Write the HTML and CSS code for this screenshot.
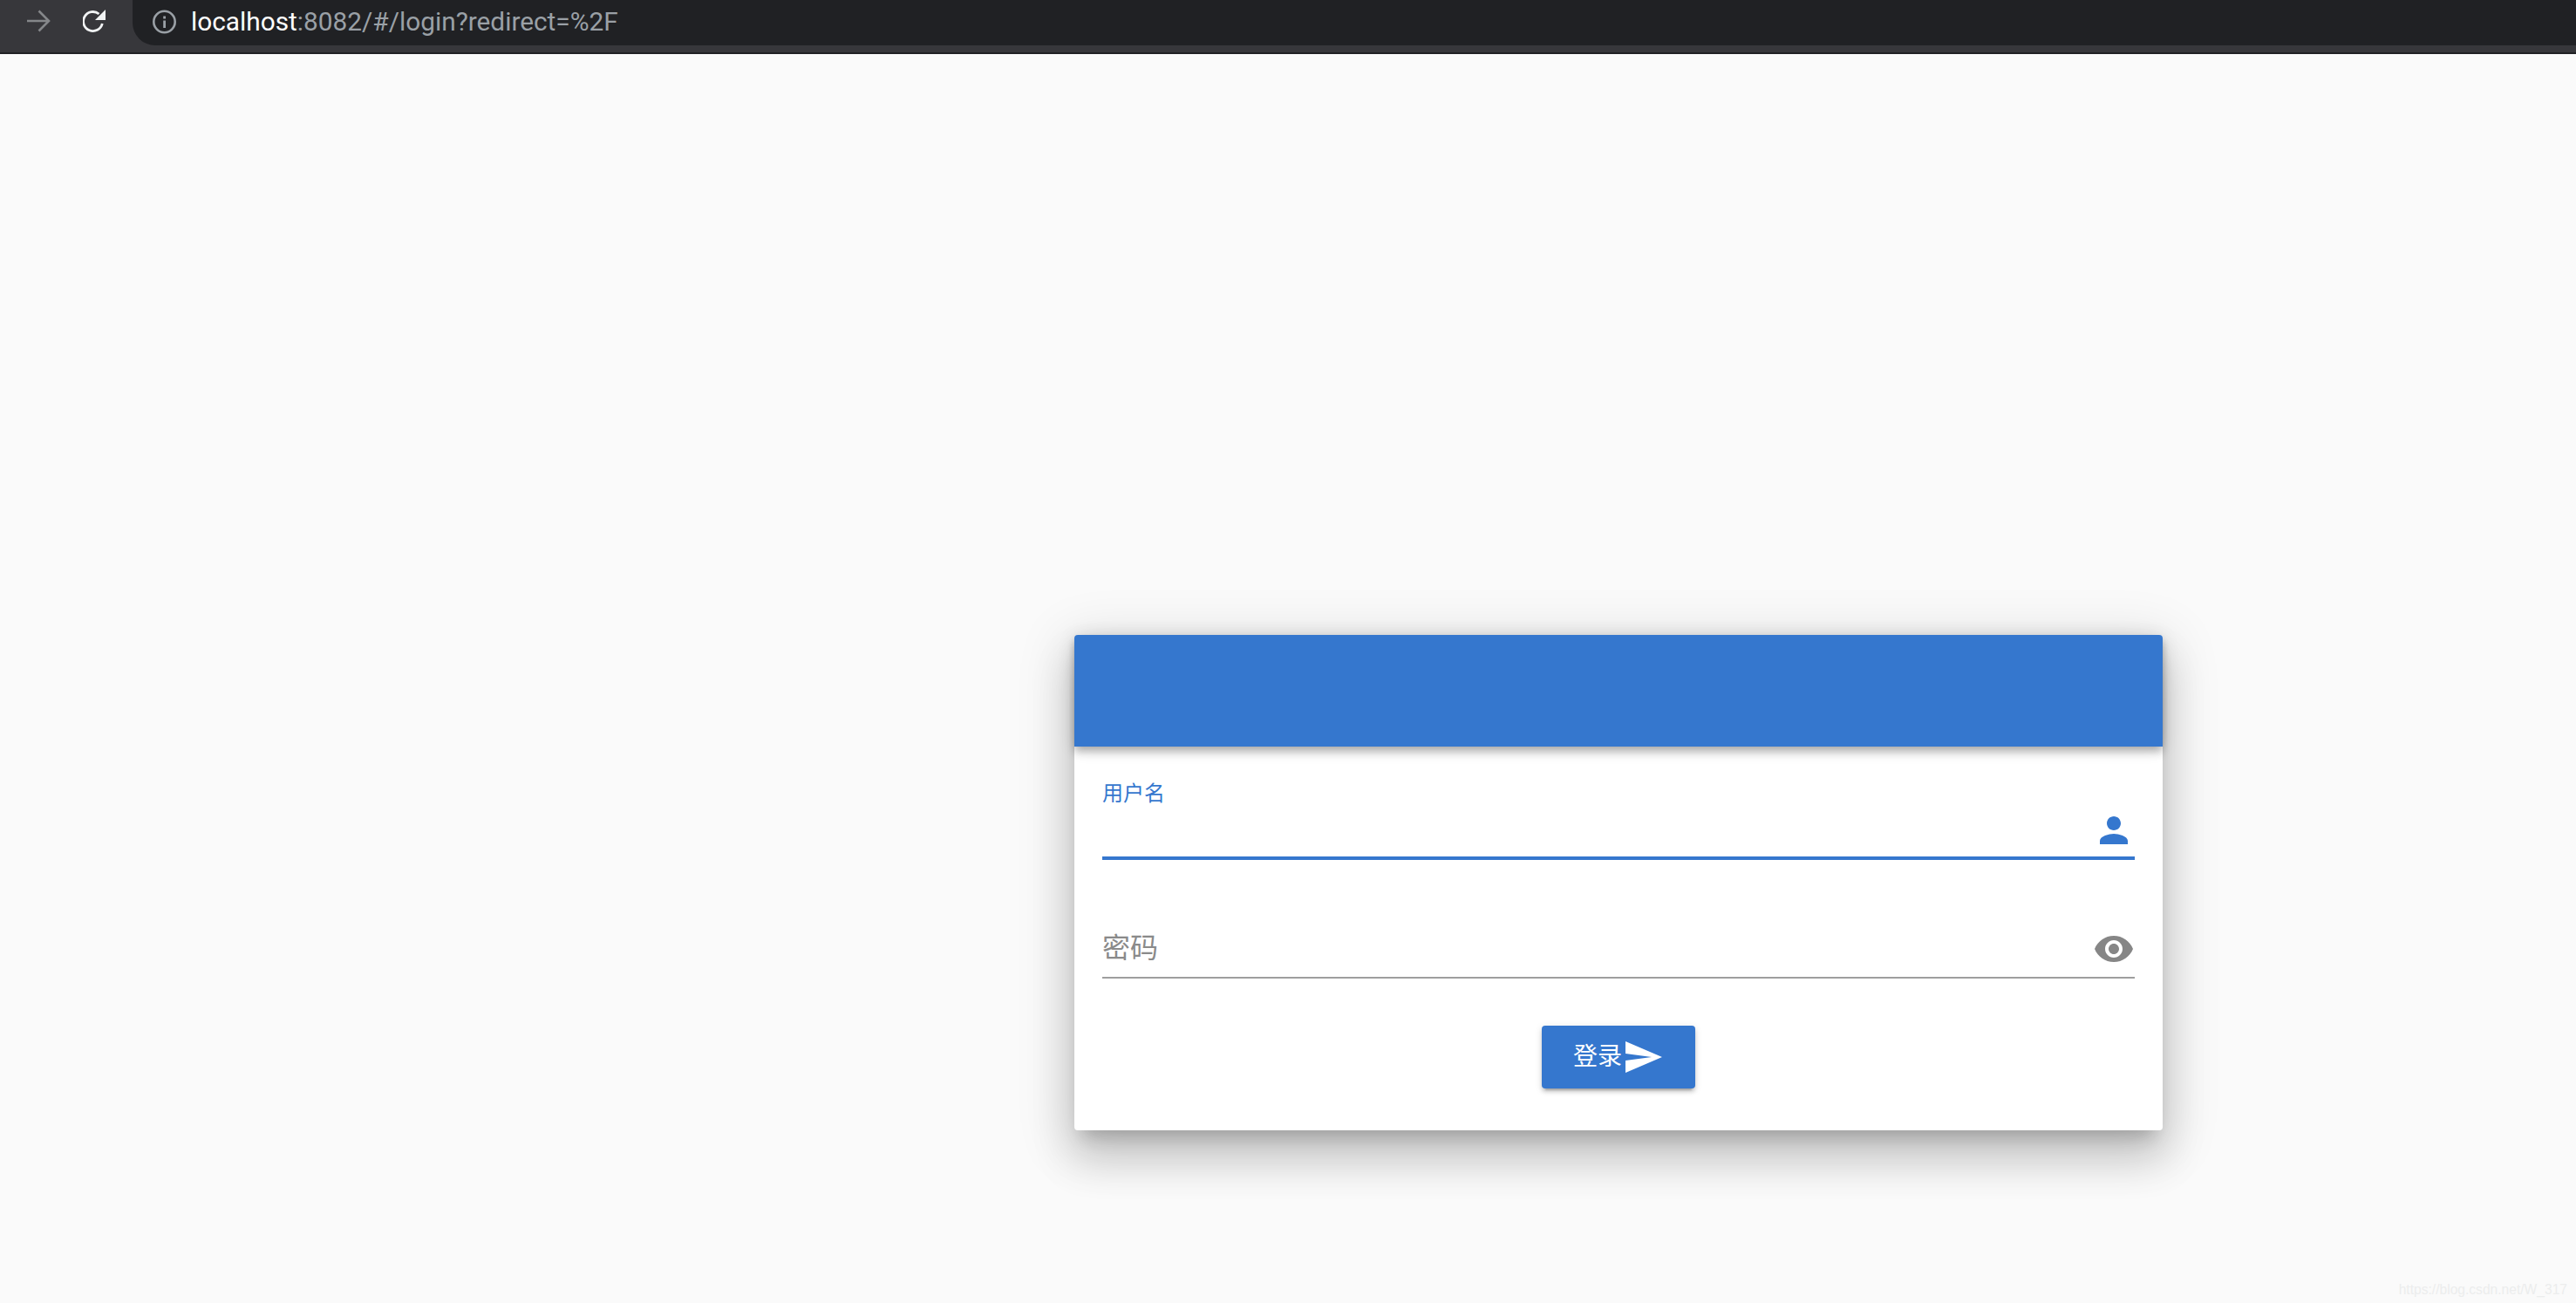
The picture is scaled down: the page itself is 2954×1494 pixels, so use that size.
FILE: index.html
```html
<!DOCTYPE html>
<html lang="zh">
<head>
<meta charset="utf-8">
<title>登录</title>
<link rel="stylesheet" href="styles.css">
</head>
<body>
<header class="toolbar">
  <svg class="nav-icon forward" viewBox="0 0 28 28" width="28" height="28"><path d="M0 13H25M13.500 1.500L25 13L13.500 24.500" fill="none" stroke="#85878a" stroke-width="2.600"/></svg>
  <svg class="nav-icon reload" viewBox="0 0 28 28" width="28" height="28"><path d="M22.300 16A11 11 0 1 1 18.500 5" fill="none" stroke="#f1f3f4" stroke-width="2.800"/><path d="M26 0V12H14Z" fill="#f1f3f4"/></svg>
  <div class="omnibox">
    <svg class="info" viewBox="0 0 28 28" width="28" height="28"><circle cx="13.500" cy="14" r="12.200" fill="none" stroke="#9aa0a6" stroke-width="2.600"/><rect x="12.200" y="12.500" width="2.800" height="8.500" fill="#9aa0a6"/><rect x="12.200" y="7.500" width="2.800" height="3" fill="#9aa0a6"/></svg>
    <span class="url"><span class="host">localhost</span>:8082/#/login?redirect=%2F</span>
  </div>
</header>
<main class="page">
  <section class="card">
    <div class="card-header"></div>
    <form class="card-body">
      <div class="field active">
        <label class="float-label">用户名</label>
        <svg class="field-icon" viewBox="0 0 24 24" width="48" height="48"><path d="M12 12c2.210 0 4-1.790 4-4s-1.790-4-4-4-4 1.790-4 4 1.790 4 4 4zm0 2c-2.670 0-8 1.340-8 4v2h16v-2c0-2.660-5.330-4-8-4z"/></svg>
      </div>
      <div class="field">
        <span class="placeholder">密码</span>
        <svg class="field-icon" viewBox="0 0 24 24" width="48" height="48"><path d="M12 4.500C7 4.500 2.730 7.610 1 12c1.730 4.390 6 7.500 11 7.500s9.270-3.110 11-7.500c-1.730-4.390-6-7.500-11-7.500zM12 17c-2.760 0-5-2.240-5-5s2.240-5 5-5 5 2.240 5 5-2.240 5-5 5zm0-8c-1.660 0-3 1.340-3 3s1.340 3 3 3 3-1.340 3-3-1.340-3-3-3z"/></svg>
      </div>
      <div class="actions">
        <button class="submit" type="button">登录<svg viewBox="0 0 24 24" width="48" height="48"><path d="M2.010 21L23 12 2.010 3 2 10l15 2-15 2z"/></svg></button>
      </div>
    </form>
  </section>
</main>
<div class="watermark">https://blog.csdn.net/W_317</div>
</body>
</html>
```
FILE: styles.css
```css
* { box-sizing: border-box; }
html, body { margin: 0; height: 100%; }
body {
  display: flex;
  flex-direction: column;
  background: #fafafa;
  font-family: Roboto, "Noto Sans CJK SC", sans-serif;
  overflow: hidden;
  position: relative;
}
.toolbar {
  flex: none;
  height: 62px;
  display: flex;
  align-items: flex-start;
  background: #37373b;
  border-bottom: 2px solid #202124;
  padding-left: 31px;
}
.nav-icon { flex: none; margin-top: 11px; }
.reload { margin-left: 36px; }
.omnibox {
  flex: 1;
  height: 52px;
  margin-left: 29px;
  padding-left: 23px;
  display: flex;
  align-items: center;
  background: #202124;
  border-bottom-left-radius: 26px;
}
.info { flex: none; margin-top: -3px; }
.url {
  margin-left: 16px;
  margin-top: -3px;
  font-size: 29.800px;
  line-height: 40px;
  color: #9aa0a6;
  white-space: nowrap;
}
.host { color: #fff; }
.page {
  flex: 1;
  padding: 666px 0 0 1232px;
}
.card {
  width: 1248px;
  height: 568px;
  background: #fff;
  border-radius: 4px;
  box-shadow: 0 16px 20px -10px rgba(0,0,0,.2), 0 32px 48px 4px rgba(0,0,0,.14), 0 12px 60px 10px rgba(0,0,0,.12);
}
.card-header {
  height: 128px;
  background: #3577ce;
  border-radius: 4px 4px 0 0;
  box-shadow: 0 4px 8px -2px rgba(0,0,0,.2), 0 8px 10px 0 rgba(0,0,0,.14), 0 2px 20px 0 rgba(0,0,0,.12);
}
.card-body { padding: 0 32px; }
.field {
  height: 72px;
  margin-top: 64px;
  display: flex;
  justify-content: flex-end;
  position: relative;
  border-bottom: 2px solid #9e9e9e;
  fill: #868686;
}
.field-icon { display: block; margin-top: 14px; }
.field.active {
  height: 74px;
  margin-top: 56px;
  border-bottom: 4px solid #3577ce;
  fill: #3577ce;
}
.field.active .field-icon { margin-top: 16px; }
.float-label {
  position: absolute;
  left: 0;
  top: -20px;
  font-size: 24px;
  line-height: 36px;
  color: #3577ce;
}
.placeholder {
  position: absolute;
  left: 0;
  top: 15px;
  font-size: 32px;
  line-height: 44px;
  color: #8a8a8a;
}
.actions { display: flex; justify-content: center; margin-top: 54px; }
.submit {
  width: 176px;
  height: 72px;
  padding: 0;
  display: flex;
  align-items: center;
  justify-content: center;
  border: 0;
  border-radius: 4px;
  background: #3577ce;
  color: #fff;
  font: 400 28px/40px Roboto, "Noto Sans CJK SC", sans-serif;
  fill: #fff;
  box-shadow: 0 6px 2px -4px rgba(0,0,0,.2), 0 4px 4px 0 rgba(0,0,0,.14), 0 2px 10px 0 rgba(0,0,0,.12);
}
.watermark {
  position: absolute;
  right: 10px;
  bottom: 3px;
  font: 15.600px/24px "Liberation Sans", sans-serif;
  color: #eceded;
}
```
